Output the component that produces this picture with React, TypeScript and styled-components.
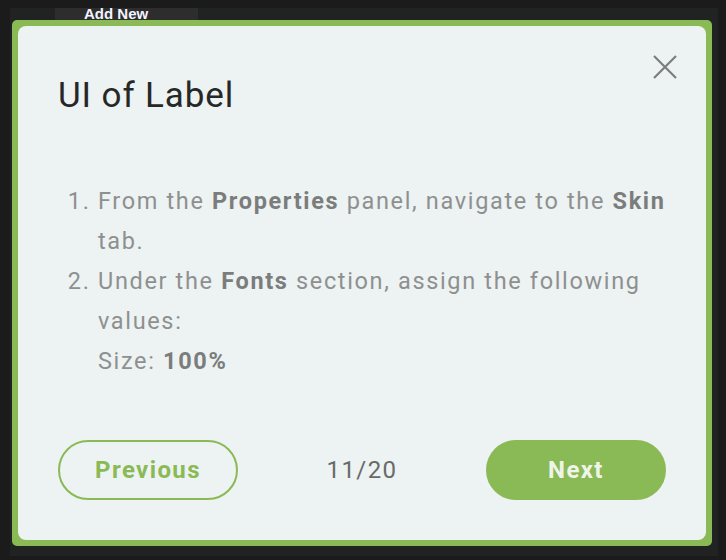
import { createGlobalStyle } from 'styled-components';
import styled from 'styled-components';

const GlobalStyle = createGlobalStyle`
    html, body {
        margin: 0;
        padding: 0;
        background: #1b1b1b;
    }
    * {
        box-sizing: border-box;
    }
`;

const Screen = styled.div`
    width: 726px;
    height: 560px;
    padding: 8px 8px 4px 10px;
    background: #1b1b1b;
    overflow: hidden;
`;

const Panel = styled.div`
    display: flex;
    flex-direction: column;
    height: 100%;
    background: #212222;
`;

const TabStrip = styled.div`
    display: flex;
    height: 12px;
    padding-left: 45px;
`;

const Tab = styled.div`
    width: 143px;
    height: 12px;
    padding-left: 29px;
    background: #2d2d2d;
    color: #f2f4ff;
    font-family: 'Liberation Sans', Arial, sans-serif;
    font-weight: 700;
    font-size: 15px;
    line-height: 12px;
    white-space: nowrap;
`;

const Dialog = styled.div`
    margin: 0 6px 0 2px;
    height: 526px;
    padding: 6px;
    background: #8aba55;
    border-radius: 5px;
`;

const Card = styled.div`
    position: relative;
    display: flex;
    flex-direction: column;
    height: 100%;
    padding: 50px 40px 0 40px;
    background: #edf2f2;
    border-radius: 8px;
    font-family: Roboto, 'Noto Sans', sans-serif;
`;

const CloseButton = styled.button`
    position: absolute;
    top: 26px;
    right: 26px;
    width: 30px;
    height: 30px;
    padding: 0;
    border: none;
    background: transparent;
    display: flex;
    align-items: center;
    justify-content: center;
    cursor: pointer;
`;

const Title = styled.h1`
    margin: 0;
    font-size: 35px;
    font-weight: 400;
    line-height: 40px;
    letter-spacing: 0.9px;
    color: #262828;
`;

const Steps = styled.ol`
    margin: 65px 0 0 0;
    padding: 0 0 0 40px;
    font-size: 23.5px;
    line-height: 40px;
    color: #8e9090;
    letter-spacing: 1.65px;

    b {
        font-weight: 700;
        color: #7b7d7d;
    }
`;

const Footer = styled.div`
    display: flex;
    align-items: center;
    justify-content: space-between;
    margin-top: auto;
    margin-bottom: 40px;
`;

const NavButton = styled.button<{ $primary?: boolean }>`
    width: 180px;
    height: 60px;
    border-radius: 30px;
    border: 2px solid #8aba55;
    background: ${({ $primary }) => ($primary ? '#8aba55' : 'transparent')};
    color: ${({ $primary }) => ($primary ? '#eef4ea' : '#8aba55')};
    font-family: Roboto, 'Noto Sans', sans-serif;
    font-size: 24px;
    font-weight: 700;
    letter-spacing: 1.4px;
    cursor: pointer;
`;

const Counter = styled.span`
    font-size: 24px;
    color: #686a6a;
    letter-spacing: 1.4px;
`;

export default function App() {
    return (
        <>
            <GlobalStyle />
            <Screen>
                <Panel>
                    <TabStrip>
                        <Tab>Add New</Tab>
                    </TabStrip>
                    <Dialog>
                        <Card>
                            <CloseButton aria-label="Close">
                                <svg width="26" height="26" viewBox="0 0 26 26">
                                    <path d="M2 2 L24 24 M24 2 L2 24" stroke="#7c7e7e" strokeWidth="2.2" fill="none" />
                                </svg>
                            </CloseButton>
                            <Title>UI of Label</Title>
                            <Steps>
                                <li>
                                    From the <b>Properties</b> panel, navigate to the <b>Skin</b> tab.
                                </li>
                                <li>
                                    Under the <b>Fonts</b> section, assign the following values:
                                    <br />
                                    Size: <b>100%</b>
                                </li>
                            </Steps>
                            <Footer>
                                <NavButton>Previous</NavButton>
                                <Counter>11/20</Counter>
                                <NavButton $primary>Next</NavButton>
                            </Footer>
                        </Card>
                    </Dialog>
                </Panel>
            </Screen>
        </>
    );
}
